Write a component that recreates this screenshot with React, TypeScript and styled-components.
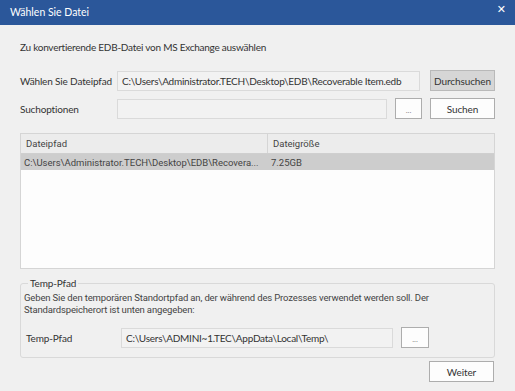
import React from 'react';
import styled, { createGlobalStyle } from 'styled-components';

const Global = createGlobalStyle`
  html, body {
    margin: 0;
    padding: 0;
    background: #f0f0f0;
  }
  body {
    font-family: Lato, "Noto Sans", sans-serif;
    letter-spacing: -0.15px;
    color: #333;
  }
`;

const Window = styled.div`
  width: 515px;
  height: 391px;
  display: flex;
  flex-direction: column;
  background: #f0f0f0;
  overflow: hidden;
`;

const TitleBar = styled.div`
  height: 25px;
  flex-shrink: 0;
  background: #2b579a;
  color: #fff;
  display: flex;
  align-items: center;
  justify-content: space-between;
  padding: 0 9px 2px 10px;
  box-sizing: border-box;
  font-size: 10.5px;
  letter-spacing: 0;
`;

const CloseButton = styled.span`
  font-family: "DejaVu Sans", sans-serif;
  font-size: 11px;
  font-weight: bold;
  line-height: 1;
  margin-top: -5px;
`;

const Content = styled.div`
  display: flex;
  flex-direction: column;
  padding: 14px 20px 0 20px;
`;

const Intro = styled.div`
  font-size: 10px;
  letter-spacing: -0.25px;
  line-height: 16px;
  margin-bottom: 15px;
`;

const FormRow = styled.div<{ $gap?: number }>`
  display: flex;
  align-items: center;
  height: 21px;
  margin-bottom: ${p => p.$gap ?? 0}px;
`;

const Label = styled.div<{ $width: number }>`
  width: ${p => p.$width}px;
  flex-shrink: 0;
  font-size: 10px;
  white-space: nowrap;
`;

const Field = styled.div<{ $width: number }>`
  width: ${p => p.$width}px;
  height: 20px;
  box-sizing: border-box;
  border: 1px solid #dadada;
  background: #f2f2f2;
  font-size: 10px;
  letter-spacing: -0.25px;
  display: flex;
  align-items: center;
  padding-left: 4px;
  white-space: nowrap;
  overflow: hidden;
  color: #333;
`;

const Button = styled.button<{ $width: number; $pressed?: boolean; $left?: number }>`
  width: ${p => p.$width}px;
  height: 21px;
  margin-left: ${p => p.$left ?? 0}px;
  box-sizing: border-box;
  border: 1px solid ${p => (p.$pressed ? '#b9b9b9' : '#adadad')};
  background: ${p => (p.$pressed ? '#d6d6d6' : '#fdfdfd')};
  font-family: Lato, "Noto Sans", sans-serif;
  font-size: 10px;
  letter-spacing: -0.1px;
  color: #333;
  padding: 0;
  display: flex;
  align-items: center;
  justify-content: center;
`;

const Dots = styled.span`
  font-size: 8px;
  color: #888;
  margin-top: 2px;
`;

const List = styled.div`
  margin-top: 14px;
  height: 136px;
  box-sizing: border-box;
  border: 1px solid #d5d5d5;
  background: #fdfdfd;
  font-family: Roboto, "Liberation Sans", sans-serif;
  font-size: 9.5px;
  letter-spacing: 0;
  color: #444;
  display: flex;
  flex-direction: column;
`;

const ListHeader = styled.div`
  display: flex;
  height: 20px;
  flex-shrink: 0;
  background: #ececec;
  border-bottom: 1px solid #cfcfcf;
  box-sizing: border-box;
`;

const HeaderCell = styled.div<{ $width?: number }>`
  ${p => (p.$width ? `width: ${p.$width}px;` : 'flex: 1;')}
  flex-shrink: 0;
  box-sizing: border-box;
  padding-left: 5px;
  display: flex;
  align-items: center;
  border-right: ${p => (p.$width ? '1px solid #d5d5d5' : 'none')};
`;

const ListRow = styled.div<{ $selected?: boolean }>`
  display: flex;
  height: 16px;
  background: ${p => (p.$selected ? '#cdcdcd' : 'transparent')};
`;

const Cell = styled.div<{ $width?: number }>`
  ${p => (p.$width ? `width: ${p.$width}px;` : 'flex: 1;')}
  flex-shrink: 0;
  box-sizing: border-box;
  padding-left: 3px;
  display: flex;
  align-items: center;
  white-space: nowrap;
  overflow: hidden;
`;

const Group = styled.section`
  margin-top: 14px;
  padding: 0 3px 9px 3px;
  border: 1px solid #d9d9d9;
  border-radius: 3px;
  display: flex;
  flex-direction: column;
`;

const GroupTitle = styled.div`
  align-self: flex-start;
  margin: -7px 0 0 4px;
  padding: 0 2px;
  background: #f0f0f0;
  font-size: 10px;
  line-height: 13px;
`;

const Description = styled.p`
  margin: 2px 0 11px 0;
  font-family: Roboto, "Liberation Sans", sans-serif;
  font-size: 9.5px;
  letter-spacing: -0.15px;
  line-height: 12px;
  color: #444;
`;

const GroupRow = styled.div`
  display: flex;
  align-items: center;
  height: 21px;
  padding-left: 2px;
`;

const Footer = styled.div`
  display: flex;
  justify-content: flex-end;
  margin-top: 3px;
  padding-right: 1px;
`;

export default function App() {
  return (
    <Window>
      <Global />
      <TitleBar>
        <span>Wählen Sie Datei</span>
        <CloseButton>✕</CloseButton>
      </TitleBar>
      <Content>
        <Intro>Zu konvertierende EDB-Datei von MS Exchange auswählen</Intro>

        <FormRow $gap={7}>
          <Label $width={97}>Wählen Sie Dateipfad</Label>
          <Field $width={303}>C:\Users\Administrator.TECH\Desktop\EDB\Recoverable Item.edb</Field>
          <Button $width={65} $left={10} $pressed>Durchsuchen</Button>
        </FormRow>

        <FormRow>
          <Label $width={97}>Suchoptionen</Label>
          <Field $width={270} />
          <Button $width={27} $left={8}><Dots>...</Dots></Button>
          <Button $width={65} $left={8}>Suchen</Button>
        </FormRow>

        <List>
          <ListHeader>
            <HeaderCell $width={247}>Dateipfad</HeaderCell>
            <HeaderCell>Dateigröße</HeaderCell>
          </ListHeader>
          <ListRow $selected>
            <Cell $width={247}>C:\Users\Administrator.TECH\Desktop\EDB\Recovera...</Cell>
            <Cell>7.25GB</Cell>
          </ListRow>
        </List>

        <Group>
          <GroupTitle>Temp-Pfad</GroupTitle>
          <Description>
            Geben Sie den temporären Standortpfad an, der während des Prozesses verwendet werden soll. Der
            Standardspeicherort ist unten angegeben:
          </Description>
          <GroupRow>
            <Label $width={95}>Temp-Pfad</Label>
            <Field $width={272}>C:\Users\ADMINI~1.TEC\AppData\Local\Temp\</Field>
            <Button $width={28} $left={8}><Dots>...</Dots></Button>
          </GroupRow>
        </Group>

        <Footer>
          <Button $width={65}>Weiter</Button>
        </Footer>
      </Content>
    </Window>
  );
}
